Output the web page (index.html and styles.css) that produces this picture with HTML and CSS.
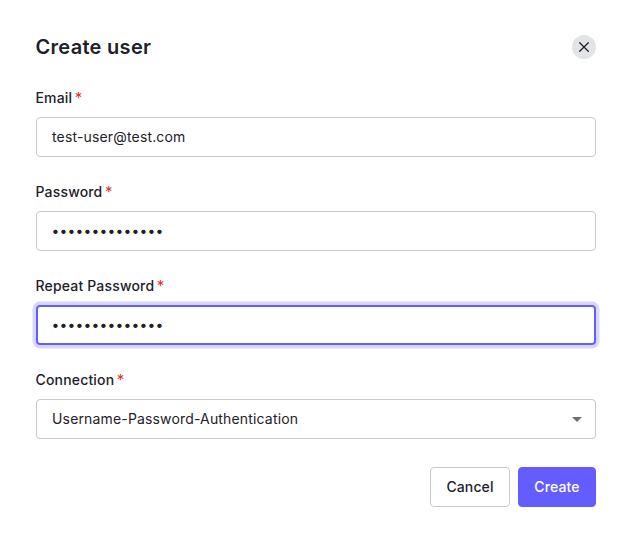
FILE: index.html
```html
<!DOCTYPE html>
<html lang="en">
<head>
<meta charset="utf-8">
<title>Create user</title>
<link rel="stylesheet" href="styles.css">
</head>
<body>
<main class="dialog">
  <header class="header">
    <h1 class="title">Create user</h1>
    <button class="close" type="button" aria-label="Close"><svg width="24" height="24" viewBox="0 0 24 24"><path d="M7.7 7.7l8.6 8.6M16.3 7.7l-8.6 8.6"/></svg></button>
  </header>
  <div class="field">
    <div class="label">Email<span class="req">*</span></div>
    <div class="control">test-user@test.com</div>
  </div>
  <div class="field">
    <div class="label">Password<span class="req">*</span></div>
    <div class="control dots">••••••••••••••</div>
  </div>
  <div class="field">
    <div class="label">Repeat Password<span class="req">*</span></div>
    <div class="control dots focused">••••••••••••••</div>
  </div>
  <div class="field">
    <div class="label">Connection<span class="req">*</span></div>
    <div class="control select"><span>Username-Password-Authentication</span><svg class="caret" width="10" height="5" viewBox="0 0 10 5"><path d="M0 0h10L5 5z"/></svg></div>
  </div>
  <footer class="actions">
    <button class="btn" type="button">Cancel</button>
    <button class="btn primary" type="button">Create</button>
  </footer>
</main>
</body>
</html>
```
FILE: styles.css
```css
* { box-sizing: border-box; }
body { margin: 0; background: #fff; color: #1e212a; font-family: Inter, sans-serif; font-size: 14px; }
.dialog { padding: 32px 37px 0 35.5px; height: 540px; }
.header { display: flex; justify-content: space-between; align-items: center; height: 30px; margin-bottom: 26px; }
.title { margin: 0; font-size: 20px; line-height: 30px; font-weight: 600; letter-spacing: 0.3px; }
.close { width: 24px; height: 24px; padding: 0; border: 0; border-radius: 50%; background: #e3e4e6; }
.close svg { display: block; fill: none; stroke: #1e212a; stroke-width: 1.3; stroke-linecap: round; }
.field { height: 94px; }
.label { height: 29px; line-height: 20px; font-weight: 500; letter-spacing: 0.17px; }
.req { color: #e0302c; font-weight: 400; margin-left: 2.5px; font-size: 15px; line-height: 1; }
.control { display: flex; align-items: center; height: 40px; margin-left: 0.5px; padding: 0 15px 2px; border: 1px solid #c9cace; border-radius: 4px; letter-spacing: 0.16px; }
.dots { padding-left: 14.4px; letter-spacing: 0.14px; }
.focused { border: 2px solid #635dff; padding: 0 14px 2px 13.4px; box-shadow: 0 0 0 3.5px #d8d6ff; }
.select { justify-content: space-between; padding-right: 13px; }
.caret { fill: #707070; position: relative; top: 1px; }
.actions { display: flex; justify-content: flex-end; gap: 8px; margin-top: 3px; }
.btn { height: 40px; width: 80px; padding: 0 0 2px; border: 1px solid #c9cace; border-radius: 4px; background: #fff; color: #1e212a; font: 500 14px Inter, sans-serif; letter-spacing: 0.12px; }
.primary { width: 78px; background: #635dff; border-color: #635dff; color: #fff; }
```
